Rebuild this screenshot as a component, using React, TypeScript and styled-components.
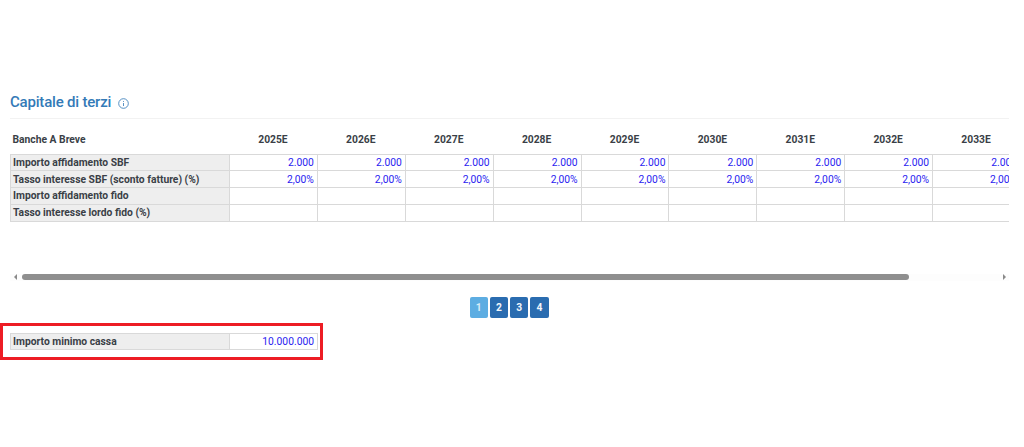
import React from 'react';
import styled, { createGlobalStyle } from 'styled-components';

const GlobalStyle = createGlobalStyle`
  html, body {
    margin: 0;
    background: #fff;
    font-family: Roboto, "Liberation Sans", sans-serif;
  }
`;

const Page = styled.div`
  width: 1024px;
  height: 447px;
  overflow: hidden;
  box-sizing: border-box;
  padding-top: 92px;
`;

const Section = styled.section`
  margin: 0 15px 0 10px;
`;

const TitleRow = styled.div`
  display: flex;
  align-items: center;
  gap: 7px;
  height: 26px;
  border-bottom: 1px solid #f2f2f2;
`;

const Title = styled.h2`
  margin: 0 0 6px;
  font-size: 15px;
  letter-spacing: -0.2px;
  line-height: 20px;
  font-weight: 500;
  color: #337ab7;
`;

const InfoIcon = styled.svg`
  width: 11px;
  height: 11px;
  margin: 0 0 4px;
  color: #337ab7;
`;

const TableClip = styled.div`
  overflow: hidden;
  margin-top: 9px;
`;

const Table = styled.table`
  table-layout: fixed;
  border-collapse: collapse;
  width: 1010.1px;
  font-size: 10.3px;
  color: #3a3f47;
`;

const HeadCell = styled.th<{ $first?: boolean }>`
  height: 23px;
  padding: 0 3px 0 2px;
  font-weight: 700;
  font-size: 10.3px;
  text-align: ${({ $first }) => ($first ? 'left' : 'center')};
`;

const Spacer = styled.tr`
  height: 3px;
`;

const LabelCell = styled.td`
  box-sizing: border-box;
  height: 16.75px;
  padding: 0 2px;
  background: #eeeeee;
  border: 1px solid #d9d9d9;
  font-weight: 700;
  white-space: nowrap;
`;

const ValueCell = styled.td`
  box-sizing: border-box;
  height: 16.75px;
  padding: 0 3px;
  border: 1px solid #d9d9d9;
  text-align: right;
  color: #2a1cf0;
  white-space: nowrap;
`;

const Scrollbar = styled.div`
  display: flex;
  align-items: center;
  gap: 5px;
  margin-top: 52px;
  height: 7px;
  background: #fdfdfd;
`;

const Arrow = styled.span<{ $dir: 'left' | 'right' }>`
  width: 0;
  height: 0;
  border-top: 3px solid transparent;
  border-bottom: 3px solid transparent;
  ${({ $dir }) =>
    $dir === 'left'
      ? 'border-right: 3px solid #8a8a8a; margin-left: 4px;'
      : 'border-left: 3px solid #8a8a8a; margin-right: 3px;'}
`;

const ScrollTrack = styled.div`
  flex: 1;
  height: 6px;
`;

const ScrollThumb = styled.div`
  width: 887px;
  height: 6px;
  border-radius: 3px;
  background: #8f8f8f;
`;

const Pagination = styled.nav`
  display: flex;
  justify-content: center;
  gap: 2px;
  margin-top: 16px;
  padding-right: 1px;
`;

const PageButton = styled.button<{ $active?: boolean }>`
  width: 18.25px;
  height: 21px;
  padding: 0;
  border: none;
  border-radius: 2px;
  background: ${({ $active }) => ($active ? '#5dade2' : '#2a6cb0')};
  color: ${({ $active }) => ($active ? '#d8ecf8' : '#f2f6fa')};
  font-family: inherit;
  font-size: 10.3px;
  font-weight: 700;
`;

const Highlight = styled.div`
  box-sizing: border-box;
  width: 323px;
  height: 37px;
  margin-top: 5px;
  border: 3px solid #ed1c24;
  padding: 7px 0 0 7px;
`;

const MinTable = styled.table`
  table-layout: fixed;
  border-collapse: collapse;
  width: 307px;
  font-size: 10.3px;
  color: #3a3f47;
`;

const years = ['2025E', '2026E', '2027E', '2028E', '2029E', '2030E', '2031E', '2032E', '2033E'];

const rows = [
  { label: 'Importo affidamento SBF', value: '2.000' },
  { label: 'Tasso interesse SBF (sconto fatture) (%)', value: '2,00%' },
  { label: 'Importo affidamento fido', value: '' },
  { label: 'Tasso interesse lordo fido (%)', value: '' },
];

export default function App() {
  return (
    <Page>
      <GlobalStyle />
      <Section>
        <TitleRow>
          <Title>Capitale di terzi</Title>
          <InfoIcon viewBox="0 0 24 24" fill="none" stroke="currentColor" strokeWidth="1.8">
            <circle cx="12" cy="12" r="10.5" />
            <path d="M12 11v6.5M12 6.5v2" />
          </InfoIcon>
        </TitleRow>
        <TableClip>
          <Table>
            <colgroup>
              <col style={{ width: 219 }} />
              {years.map((y) => (
                <col key={y} style={{ width: 87.9 }} />
              ))}
            </colgroup>
            <thead>
              <tr>
                <HeadCell $first>Banche A Breve</HeadCell>
                {years.map((y) => (
                  <HeadCell key={y}>{y}</HeadCell>
                ))}
              </tr>
              <Spacer />
            </thead>
            <tbody>
              {rows.map((row) => (
                <tr key={row.label}>
                  <LabelCell>{row.label}</LabelCell>
                  {years.map((y) => (
                    <ValueCell key={y}>{row.value}</ValueCell>
                  ))}
                </tr>
              ))}
            </tbody>
          </Table>
        </TableClip>
        <Scrollbar>
          <Arrow $dir="left" />
          <ScrollTrack>
            <ScrollThumb />
          </ScrollTrack>
          <Arrow $dir="right" />
        </Scrollbar>
        <Pagination>
          <PageButton $active>1</PageButton>
          <PageButton>2</PageButton>
          <PageButton>3</PageButton>
          <PageButton>4</PageButton>
        </Pagination>
      </Section>
      <Highlight>
        <MinTable>
          <colgroup>
            <col style={{ width: 219 }} />
            <col style={{ width: 88 }} />
          </colgroup>
          <tbody>
            <tr>
              <LabelCell>Importo minimo cassa</LabelCell>
              <ValueCell>10.000.000</ValueCell>
            </tr>
          </tbody>
        </MinTable>
      </Highlight>
    </Page>
  );
}
